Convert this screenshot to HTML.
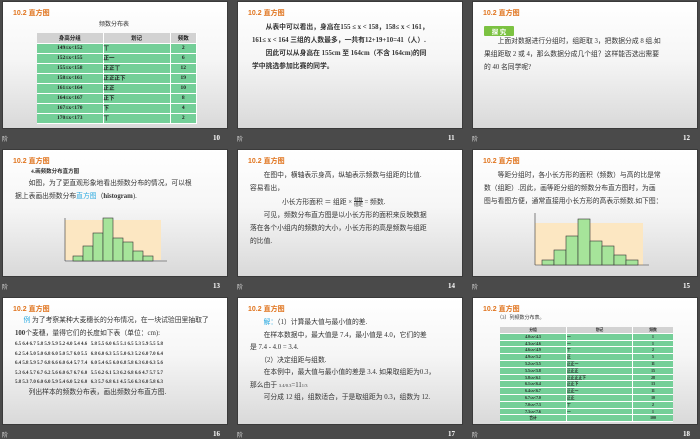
<!DOCTYPE html>
<html><head><meta charset="utf-8"><style>
*{margin:0;padding:0;box-sizing:border-box}
body{width:700px;height:438px;background:#4a4a4a;position:relative;overflow:hidden;font-family:"Liberation Serif","Noto Sans CJK SC",serif;color:#333}
.s{position:absolute;width:226px;height:128px;background:linear-gradient(#ffffff 0%,#f6f6f6 45%,#d9d9d9 100%);overflow:hidden;border:1px solid #3a3a3a}
.t{position:absolute;left:10px;top:6px;font-size:7px;font-weight:bold;color:#e0741e;font-family:"Liberation Sans","Noto Sans CJK SC",sans-serif}
.f{position:absolute;font-size:6px;color:#ddd;font-family:"Noto Sans CJK SC",sans-serif}
.n{position:absolute;font-size:7px;color:#fff;font-weight:bold}
.p{position:absolute;font-size:6.8px;line-height:13px;color:#333;white-space:nowrap}
table{border-collapse:collapse;position:absolute}
td{border-bottom:1px solid #fff;border-right:1px solid #fff;text-align:center;color:#222;font-weight:bold;padding:0}
.g{position:absolute;left:27px;width:173px;top:29px}
.g div{display:flex;height:6.8px;overflow:hidden;background:#74cf98;border-bottom:0.6px solid #fff;font-size:3.8px;line-height:6px;font-weight:bold;color:#222}
.g div.h{background:#d2d2d2}
.g span{display:block;overflow:hidden;border-right:0.6px solid #fff;text-align:center}
.g span:nth-child(1){width:67px}.g span:nth-child(2){width:66px;text-align:left}.g span:nth-child(3){flex:1;border-right:0}
</style></head><body>

<!-- row 1 -->
<div class="s" style="left:2px;top:1px">
<div class="t">10.2 直方图</div>
<div class="p" style="left:96px;top:17px;font-size:6px">频数分布表</div>
<table style="left:34px;top:31px;width:160px;font-size:5.5px">
<tr style="background:#d2d2d2;height:10px"><td style="width:66px">身高分组</td><td style="width:67px">划记</td><td>频数</td></tr>
<tr style="background:#74cf98;height:10px"><td>149≤x&lt;152</td><td style="text-align:left">丅</td><td>2</td></tr>
<tr style="background:#74cf98;height:10px"><td>152≤x&lt;155</td><td style="text-align:left">正一</td><td>6</td></tr>
<tr style="background:#74cf98;height:10px"><td>155≤x&lt;158</td><td style="text-align:left">正正丅</td><td>12</td></tr>
<tr style="background:#74cf98;height:10px"><td>158≤x&lt;161</td><td style="text-align:left">正正正下</td><td>19</td></tr>
<tr style="background:#74cf98;height:10px"><td>161≤x&lt;164</td><td style="text-align:left">正正</td><td>10</td></tr>
<tr style="background:#74cf98;height:10px"><td>164≤x&lt;167</td><td style="text-align:left">正下</td><td>8</td></tr>
<tr style="background:#74cf98;height:10px"><td>167≤x&lt;170</td><td style="text-align:left">下</td><td>4</td></tr>
<tr style="background:#74cf98;height:10px"><td>170≤x&lt;173</td><td style="text-align:left">丅</td><td>2</td></tr>
</table>
</div>
<div class="f" style="left:2px;top:134px">阶</div><div class="n" style="left:213px;top:134px">10</div>

<div class="s" style="left:237px;top:1px">
<div class="t">10.2 直方图</div>
<div class="p" style="left:14px;top:19px;font-weight:bold">　　从表中可以看出，身高在155 ≤ x &lt; 158，158≤ x &lt; 161，<br>161≤ x &lt; 164 三组的人数最多，一共有12+19+10=41（人）.<br>　　因此可以从身高在 155cm 至 164cm（不含 164cm)的同<br>学中挑选参加比赛的同学。</div>
</div>
<div class="f" style="left:237px;top:134px">阶</div><div class="n" style="left:448px;top:134px">11</div>

<div class="s" style="left:472px;top:1px">
<div class="t">10.2 直方图</div>
<div style="position:absolute;left:11px;top:24px;width:30px;height:10px;background:#7cc242;color:#fff;font-size:6.5px;font-weight:bold;text-align:center;line-height:10px;border-radius:1px;font-family:'Noto Sans CJK SC',sans-serif">探 究</div>
<div class="p" style="left:11px;top:33px">　　上面对数据进行分组时，组距取 3，把数据分成 8 组.如<br>果组距取 2 或 4，那么数据分成几个组？这样能否选出需要<br>的 40 名同学呢?</div>
</div>
<div class="f" style="left:472px;top:134px">阶</div><div class="n" style="left:683px;top:134px">12</div>

<!-- row 2 -->
<div class="s" style="left:2px;top:149px">
<div class="t">10.2 直方图</div>
<div class="p" style="left:28px;top:16px;font-size:5.5px;font-weight:bold">4.画频数分布直方图</div>
<div class="p" style="left:12px;top:27px">　　如图，为了更直观形象地看出频数分布的情况，可以根<br>据上表画出频数分布<span style="color:#29a9e0">直方图</span>（<b>histogram</b>).</div>
<svg style="position:absolute;left:56px;top:66px" width="116" height="52">
<rect x="6" y="4" width="96" height="40" fill="#fce7c2"/>
<line x1="6" y1="2" x2="6" y2="45" stroke="#333" stroke-width="0.6"/><line x1="6" y1="45" x2="108" y2="45" stroke="#333" stroke-width="0.6"/>
<g fill="#a6e49a" stroke="#333" stroke-width="0.6">
<rect x="14" y="40" width="10" height="5"/><rect x="24" y="30" width="10" height="15"/><rect x="34" y="17" width="10" height="28"/><rect x="44" y="2" width="10" height="43"/><rect x="54" y="22" width="10" height="23"/><rect x="64" y="26" width="10" height="19"/><rect x="74" y="35" width="10" height="10"/><rect x="84" y="40" width="10" height="5"/>
</g></svg>
</div>
<div class="f" style="left:2px;top:282px">阶</div><div class="n" style="left:213px;top:282px">13</div>

<div class="s" style="left:237px;top:149px">
<div class="t">10.2 直方图</div>
<div class="p" style="left:12px;top:19px">　　在图中，横轴表示身高，纵轴表示频数与组距的比值.<br>容易看出，</div>
<div class="p" style="left:44px;top:46px">小长方形面积 ＝ 组距 × <span style="display:inline-block;font-size:4.5px;line-height:5px;vertical-align:middle;text-align:center">频数<br><span style="border-top:0.6px solid #333">组距</span></span> = 频数.</div>
<div class="p" style="left:12px;top:59px">　　可见，频数分布直方图是以小长方形的面积来反映数据<br>落在各个小组内的频数的大小，小长方形的高是频数与组距<br>的比值.</div>
</div>
<div class="f" style="left:237px;top:282px">阶</div><div class="n" style="left:448px;top:282px">14</div>

<div class="s" style="left:472px;top:149px">
<div class="t">10.2 直方图</div>
<div class="p" style="left:11px;top:19px">　　等距分组时，各小长方形的面积（频数）与高的比是常<br>数（组距）.因此，画等距分组的频数分布直方图时，为画<br>图与看图方便，通常直接用小长方形的高表示频数.如下图：</div>
<svg style="position:absolute;left:56px;top:62px" width="130" height="58">
<rect x="6" y="11" width="108" height="42" fill="#fce7c2"/>
<line x1="6" y1="1" x2="6" y2="53" stroke="#333" stroke-width="0.6"/><line x1="6" y1="53" x2="120" y2="53" stroke="#333" stroke-width="0.6"/>
<g fill="#a6e49a" stroke="#333" stroke-width="0.6">
<rect x="13" y="48" width="12" height="5"/><rect x="25" y="38" width="12" height="15"/><rect x="37" y="24" width="12" height="29"/><rect x="49" y="7" width="12" height="46"/><rect x="61" y="29" width="12" height="24"/><rect x="73" y="34" width="12" height="19"/><rect x="85" y="43" width="12" height="10"/><rect x="97" y="48" width="12" height="5"/>
</g></svg>
</div>
<div class="f" style="left:472px;top:282px">阶</div><div class="n" style="left:683px;top:282px">15</div>

<!-- row 3 -->
<div class="s" style="left:2px;top:297px">
<div class="t">10.2 直方图</div>
<div class="p" style="left:12px;top:16px">　 <span style="color:#29a9e0">例</span> 为了考察某种大麦穗长的分布情况，在一块试验田里抽取了<br><b>100</b>个麦穗，量得它们的长度如下表（单位：cm):</div>
<div class="p" style="left:12px;top:42px;font-size:4.9px;line-height:9.5px;font-weight:bold">6.5 6.4 6.7 5.8 5.9 5.9 5.2 4.0 5.4 4.6 &nbsp; 5.8 5.5 6.0 6.5 5.1 6.5 5.3 5.9 5.5 5.8<br>6.2 5.4 5.0 5.0 6.8 6.0 5.0 5.7 6.0 5.5 &nbsp; 6.8 6.0 6.3 5.5 5.0 6.3 5.2 6.0 7.0 6.4<br>6.4 5.8 5.9 5.7 6.8 6.6 6.0 6.4 5.7 7.4 &nbsp; 6.0 5.4 6.5 6.0 6.8 5.8 6.3 6.0 6.3 5.6<br>5.3 6.4 5.7 6.7 6.2 5.6 6.0 6.7 6.7 6.0 &nbsp; 5.5 6.2 6.1 5.3 6.2 6.8 6.6 4.7 5.7 5.7<br>5.8 5.3 7.0 6.0 6.0 5.9 5.4 6.0 5.2 6.0 &nbsp; 6.3 5.7 6.8 6.1 4.5 5.6 6.3 6.0 5.8 6.3</div>
<div class="p" style="left:12px;top:88px">　　列出样本的频数分布表，画出频数分布直方图.</div>
</div>
<div class="f" style="left:2px;top:430px">阶</div><div class="n" style="left:213px;top:430px">16</div>

<div class="s" style="left:237px;top:297px">
<div class="t">10.2 直方图</div>
<div class="p" style="left:12px;top:19px;line-height:12.5px">　　<span style="color:#29a9e0">解：</span>（1）计算最大值与最小值的差.<br>　　在样本数据中，最大值是 7.4，最小值是 4.0，它们的差<br>是 7.4 - 4.0 = 3.4.<br>　　（2）决定组距与组数.<br>　　在本例中，最大值与最小值的差是 3.4. 如果取组距为0.3，<br>那么由于 <span style="font-size:4.5px">3.4/0.3</span>=11<span style="font-size:4.5px">1/3</span><br>　　可分成 12 组，组数适合，于是取组距为 0.3，组数为 12.</div>
</div>
<div class="f" style="left:237px;top:430px">阶</div><div class="n" style="left:448px;top:430px">17</div>

<div class="s" style="left:472px;top:297px">
<div class="t">10.2 直方图</div>
<div class="p" style="left:24px;top:17px;font-size:5px;line-height:8px">（3）列频数分布表。</div>
<div class="g">
<div class="h"><span>分组</span><span style="text-align:center">划记</span><span>频数</span></div>
<div><span>4.0≤x&lt;4.3</span><span>一</span><span>1</span></div>
<div><span>4.3≤x&lt;4.6</span><span>一</span><span>1</span></div>
<div><span>4.6≤x&lt;4.9</span><span>丅</span><span>2</span></div>
<div><span>4.9≤x&lt;5.2</span><span>正</span><span>5</span></div>
<div><span>5.2≤x&lt;5.5</span><span>正正一</span><span>11</span></div>
<div><span>5.5≤x&lt;5.8</span><span>正正正</span><span>15</span></div>
<div><span>5.8≤x&lt;6.1</span><span>正正正正下</span><span>28</span></div>
<div><span>6.1≤x&lt;6.4</span><span>正正下</span><span>13</span></div>
<div><span>6.4≤x&lt;6.7</span><span>正正一</span><span>11</span></div>
<div><span>6.7≤x&lt;7.0</span><span>正正</span><span>10</span></div>
<div><span>7.0≤x&lt;7.3</span><span>丅</span><span>2</span></div>
<div><span>7.3≤x&lt;7.6</span><span>一</span><span>1</span></div>
<div><span>合计</span><span></span><span>100</span></div>
</div>
</div>
<div class="f" style="left:472px;top:430px">阶</div><div class="n" style="left:683px;top:430px">18</div>

</body></html>
